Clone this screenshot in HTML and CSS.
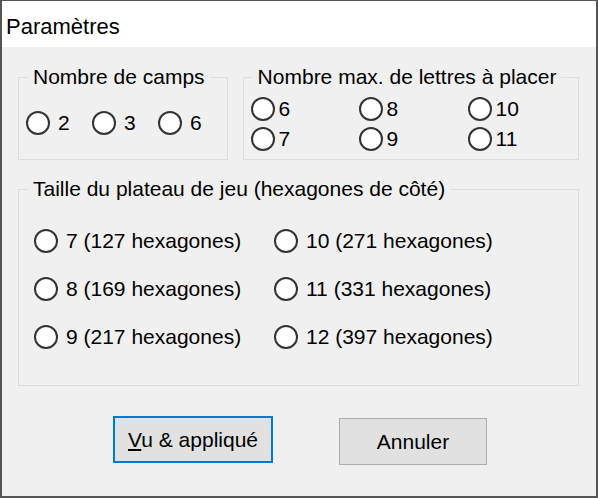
FILE: index.html
```html
<!DOCTYPE html>
<html lang="fr">
<head>
<meta charset="utf-8">
<title>Paramètres</title>
<link rel="stylesheet" href="styles.css">
</head>
<body>
<div class="window">
  <div class="titlebar">Paramètres</div>
  <div class="content">
    <div class="top-row">
      <fieldset class="group group-camps">
        <legend>Nombre de camps</legend>
        <div class="grid-camps">
          <label class="radio"><input type="radio" name="camps"><span>2</span></label>
          <label class="radio"><input type="radio" name="camps"><span>3</span></label>
          <label class="radio"><input type="radio" name="camps"><span>6</span></label>
        </div>
      </fieldset>
      <fieldset class="group group-lettres">
        <legend>Nombre max. de lettres à placer</legend>
        <div class="grid-lettres">
          <label class="radio tight"><input type="radio" name="lettres"><span>6</span></label>
          <label class="radio tight"><input type="radio" name="lettres"><span>8</span></label>
          <label class="radio tight"><input type="radio" name="lettres"><span>10</span></label>
          <label class="radio tight"><input type="radio" name="lettres"><span>7</span></label>
          <label class="radio tight"><input type="radio" name="lettres"><span>9</span></label>
          <label class="radio tight"><input type="radio" name="lettres"><span>11</span></label>
        </div>
      </fieldset>
    </div>
    <fieldset class="group group-taille">
      <legend>Taille du plateau de jeu (hexagones de côté)</legend>
      <div class="grid-taille">
        <label class="radio"><input type="radio" name="taille"><span>7 (127 hexagones)</span></label>
        <label class="radio"><input type="radio" name="taille"><span>10 (271 hexagones)</span></label>
        <label class="radio"><input type="radio" name="taille"><span>8 (169 hexagones)</span></label>
        <label class="radio"><input type="radio" name="taille"><span>11 (331 hexagones)</span></label>
        <label class="radio"><input type="radio" name="taille"><span>9 (217 hexagones)</span></label>
        <label class="radio"><input type="radio" name="taille"><span>12 (397 hexagones)</span></label>
      </div>
    </fieldset>
    <div class="buttons">
      <button class="btn btn-default"><u>V</u>u &amp; appliqué</button>
      <button class="btn btn-cancel">Annuler</button>
    </div>
  </div>
</div>
</body>
</html>
```
FILE: styles.css
```css
* { box-sizing: border-box; }

html, body {
  margin: 0;
  padding: 0;
  background: #f0f0f0;
}

body {
  font-family: "Liberation Sans", Arial, sans-serif;
  font-size: 21px;
  color: #000;
}

.window {
  width: 598px;
  height: 498px;
  border-style: solid;
  border-color: #555555;
  border-width: 1px 2px 2px 2px;
  background: #f0f0f0;
  overflow: hidden;
}

.titlebar {
  height: 46px;
  background: #ffffff;
  padding-left: 4px;
  line-height: 52px;
  font-size: 22px;
}

.content {
  padding: 18px 17px 0 16px;
}

.top-row {
  display: flex;
  gap: 15px;
}

.group {
  margin: 0;
  padding: 0;
  border: 1px solid #dcdcdc;
  min-width: 0;
}

.group legend {
  margin-left: 9px;
  padding: 0 5px;
  line-height: 24px;
  height: 24px;
}

.group-camps {
  width: 210px;
}

.group-lettres {
  width: 337px;
}

.grid-camps {
  display: grid;
  grid-template-columns: repeat(3, 66px);
  padding: 22px 0 24px 7px;
}

.grid-lettres {
  display: grid;
  grid-template-columns: 108px 109px auto;
  row-gap: 6px;
  padding: 8px 0 8px 7px;
}

.group-taille {
  margin-top: 17px;
  width: 561px;
}

.grid-taille {
  display: grid;
  grid-template-columns: 240px auto;
  row-gap: 24px;
  padding: 28px 0 36px 15px;
}

.radio {
  display: flex;
  align-items: center;
  gap: 8px;
  height: 24px;
  line-height: 24px;
  white-space: nowrap;
}

.radio.tight {
  gap: 4px;
}

.radio input {
  appearance: none;
  -webkit-appearance: none;
  margin: 0;
  width: 24px;
  height: 24px;
  flex: none;
  border: 2px solid #333333;
  border-radius: 50%;
  background: #ffffff;
}

.buttons {
  display: flex;
  justify-content: center;
  align-items: flex-start;
  gap: 66px;
  margin-top: 30px;
  padding-left: 3px;
}

.btn {
  font-family: "Liberation Sans", Arial, sans-serif;
  font-size: 21px;
  color: #000;
  background: #e1e1e1;
  height: 47px;
  padding: 0;
  margin: 0;
}

.btn u {
  text-underline-offset: 2px;
}

.btn-default {
  width: 160px;
  border: 2px solid #0078d7;
}

.btn-cancel {
  width: 148px;
  border: 1px solid #adadad;
  margin-top: 2px;
}
```
